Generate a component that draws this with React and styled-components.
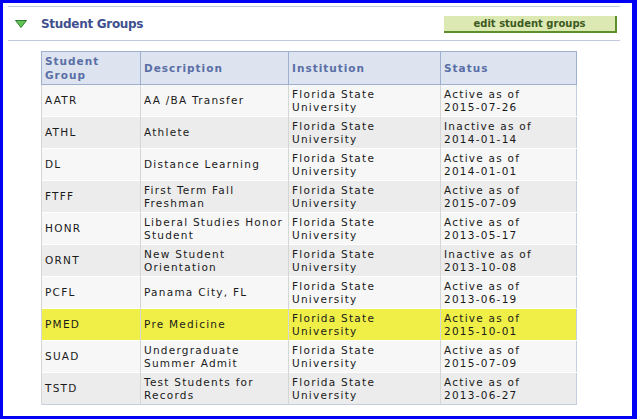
import React from 'react';
import styled, { createGlobalStyle } from 'styled-components';

const GlobalStyle = createGlobalStyle`
  body {
    margin: 0;
    background: #ffffff;
    font-family: "DejaVu Sans", Verdana, sans-serif;
  }
`;

const Frame = styled.div`
  box-sizing: border-box;
  width: 637px;
  height: 419px;
  border: 3px solid #0000f5;
  border-right-width: 5px;
  background: #ffffff;
  padding: 3px 12px 0 5px;
`;

const Rule = styled.div`
  height: 1px;
  background: #c3c9dc;
`;

const SectionHeader = styled.div`
  display: flex;
  align-items: center;
  justify-content: space-between;
  height: 33px;
  padding-right: 3px;
`;

const TitleGroup = styled.div`
  display: flex;
  align-items: center;
  gap: 14px;
  padding-left: 7px;
`;

const Title = styled.h2`
  margin: 0;
  font-size: 12px;
  font-weight: bold;
  color: #404f8e;
  letter-spacing: -0.3px;
`;

const EditButton = styled.button`
  box-sizing: border-box;
  width: 173px;
  height: 17px;
  padding: 0;
  margin-top: 2px;
  border: none;
  border-right: 2px solid #5c8e2a;
  border-bottom: 2px solid #5c8e2a;
  background: #dce9b3;
  color: #3d5a22;
  font-family: "DejaVu Sans", Verdana, sans-serif;
  font-size: 10px;
  font-weight: bold;
  cursor: pointer;
`;

const Table = styled.table`
  width: 535px;
  margin: 10px 0 0 33px;
  border-collapse: collapse;
  table-layout: fixed;
  border: 1px solid #c6cedd;
  font-size: 10.5px;
  letter-spacing: 1.25px;
`;

const HeadCell = styled.th`
  height: 32px;
  padding: 0 1px 0 3px;
  text-align: left;
  vertical-align: middle;
  background: #dde4ef;
  color: #5a6ea6;
  font-weight: bold;
  line-height: 14px;
  letter-spacing: 1px;
  border: 1px solid #9eb0cf;
`;

const Row = styled.tr`
  background: ${p => (p.$highlight ? '#f0ef48' : p.$odd ? '#ececec' : '#f7f7f7')};
`;

const Cell = styled.td`
  height: 31px;
  padding: 0 0 0 3px;
  vertical-align: middle;
  color: #1a1a1a;
  line-height: 13px;
  border-top: 1px solid #ffffff;
  border-left: 1px solid #d6d6d6;
`;

const groups = [
  ['AATR', 'AA /BA Transfer', 'Active as of', '2015-07-26'],
  ['ATHL', 'Athlete', 'Inactive as of', '2014-01-14'],
  ['DL', 'Distance Learning', 'Active as of', '2014-01-01'],
  ['FTFF', 'First Term Fall Freshman', 'Active as of', '2015-07-09'],
  ['HONR', 'Liberal Studies Honor Student', 'Active as of', '2013-05-17'],
  ['ORNT', 'New Student Orientation', 'Inactive as of', '2013-10-08'],
  ['PCFL', 'Panama City, FL', 'Active as of', '2013-06-19'],
  ['PMED', 'Pre Medicine', 'Active as of', '2015-10-01'],
  ['SUAD', 'Undergraduate Summer Admit', 'Active as of', '2015-07-09'],
  ['TSTD', 'Test Students for Records', 'Active as of', '2013-06-27'],
];

function Triangle() {
  return (
    <svg width="12" height="8" viewBox="0 0 12 8">
      <polygon points="0.5,0.5 11.5,0.5 6,7.5" fill="#62c455" stroke="#2f7d33" strokeWidth="1" />
    </svg>
  );
}

export default function App() {
  return (
    <>
      <GlobalStyle />
      <Frame>
        <Rule />
        <SectionHeader>
          <TitleGroup>
            <Triangle />
            <Title>Student Groups</Title>
          </TitleGroup>
          <EditButton>edit student groups</EditButton>
        </SectionHeader>
        <Rule />
        <Table>
          <colgroup>
            <col style={{ width: 99 }} />
            <col style={{ width: 148 }} />
            <col style={{ width: 152 }} />
            <col style={{ width: 136 }} />
          </colgroup>
          <thead>
            <tr>
              <HeadCell>Student<br />Group</HeadCell>
              <HeadCell>Description</HeadCell>
              <HeadCell>Institution</HeadCell>
              <HeadCell>Status</HeadCell>
            </tr>
          </thead>
          <tbody>
            {groups.map(([code, desc, state, date], i) => (
              <Row key={code} $odd={i % 2 === 1} $highlight={code === 'PMED'}>
                <Cell>{code}</Cell>
                <Cell>{desc}</Cell>
                <Cell>Florida State<br />University</Cell>
                <Cell>{state}<br />{date}</Cell>
              </Row>
            ))}
          </tbody>
        </Table>
      </Frame>
    </>
  );
}
